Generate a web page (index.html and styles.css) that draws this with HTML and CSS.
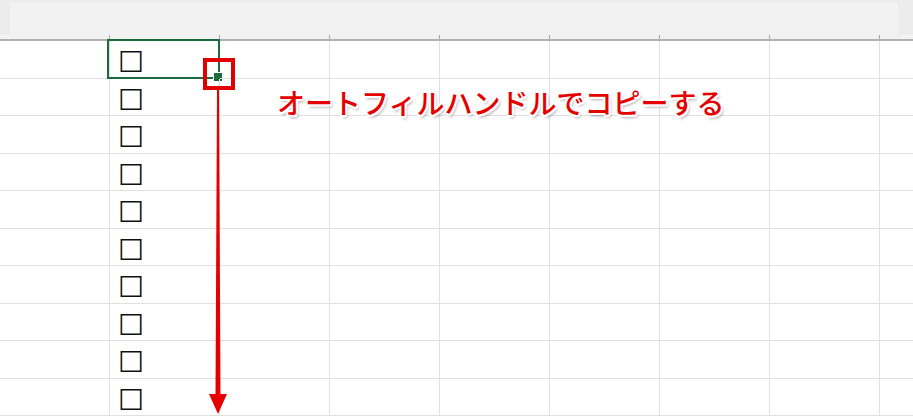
FILE: index.html
```html
<html>
	<head>
		<link rel="stylesheet" href="styles.css">
	</head>
	<body>
		<div class="page">
			<div class="header">
				<div class="header-panel"></div>
				<div class="ticks">
					<div></div><div class="sel"></div><div></div><div></div><div></div><div></div><div></div><div></div><div></div>
				</div>
			</div>
			<div class="sheet">
				<div class="cell"></div><div class="cell selected"><span class="box">☐</span></div><div class="cell"></div><div class="cell"></div><div class="cell"></div><div class="cell"></div><div class="cell"></div><div class="cell"></div><div class="cell"></div>
				<div class="cell"></div><div class="cell"><span class="box">☐</span></div><div class="cell"></div><div class="cell"></div><div class="cell"></div><div class="cell"></div><div class="cell"></div><div class="cell"></div><div class="cell"></div>
				<div class="cell"></div><div class="cell"><span class="box">☐</span></div><div class="cell"></div><div class="cell"></div><div class="cell"></div><div class="cell"></div><div class="cell"></div><div class="cell"></div><div class="cell"></div>
				<div class="cell"></div><div class="cell"><span class="box">☐</span></div><div class="cell"></div><div class="cell"></div><div class="cell"></div><div class="cell"></div><div class="cell"></div><div class="cell"></div><div class="cell"></div>
				<div class="cell"></div><div class="cell"><span class="box">☐</span></div><div class="cell"></div><div class="cell"></div><div class="cell"></div><div class="cell"></div><div class="cell"></div><div class="cell"></div><div class="cell"></div>
				<div class="cell"></div><div class="cell"><span class="box">☐</span></div><div class="cell"></div><div class="cell"></div><div class="cell"></div><div class="cell"></div><div class="cell"></div><div class="cell"></div><div class="cell"></div>
				<div class="cell"></div><div class="cell"><span class="box">☐</span></div><div class="cell"></div><div class="cell"></div><div class="cell"></div><div class="cell"></div><div class="cell"></div><div class="cell"></div><div class="cell"></div>
				<div class="cell"></div><div class="cell"><span class="box">☐</span></div><div class="cell"></div><div class="cell"></div><div class="cell"></div><div class="cell"></div><div class="cell"></div><div class="cell"></div><div class="cell"></div>
				<div class="cell"></div><div class="cell"><span class="box">☐</span></div><div class="cell"></div><div class="cell"></div><div class="cell"></div><div class="cell"></div><div class="cell"></div><div class="cell"></div><div class="cell"></div>
				<div class="cell"></div><div class="cell"><span class="box">☐</span></div><div class="cell"></div><div class="cell"></div><div class="cell"></div><div class="cell"></div><div class="cell"></div><div class="cell"></div><div class="cell"></div>
			</div>

			<!-- annotations -->
			<div class="handle-mark"></div>
			<svg class="arrow" width="24" height="330" viewBox="0 0 24 330">
				<polygon points="9,0 11,0 12.5,306 7.5,306" fill="#e60000"/>
				<polygon points="1,304 19,304 10,324" fill="#e60000"/>
			</svg>
			<p class="note">オートフィルハンドルでコピーする</p>
		</div>
	</body>
</html>
```

FILE: styles.css
```css
* {
	box-sizing: border-box;
	padding: 0;
	margin: 0;
}
html {
	background-color: white;
	font-family: "Liberation Sans", sans-serif;
}
.page {
	position: relative;
	width: 913px;
	height: 417px;
	overflow: hidden;
}
.header {
	height: 41px;
	background-color: #ececec;
	border-bottom: 2px solid #b1b1b1;
	display: flex;
	flex-direction: column;
}
.header-panel {
	flex: 1;
	margin: 2px 15px 0 10px;
	background-color: #f2f2f2;
}
.ticks {
	height: 4px;
	display: grid;
	grid-template-columns: 110px repeat(8, 110px);
	background-color: #f2f2f2;
}
.ticks div {
	border-right: 1px solid #a8a8a8;
}
.sheet {
	display: grid;
	grid-template-columns: 110px repeat(8, 110px);
	grid-auto-rows: 37.5px;
}
.cell {
	position: relative;
	border-right: 1px solid #e0e0e0;
	border-bottom: 1px solid #e0e0e0;
	padding: 7px 0 0 8px;
}
.box {
	font-family: "DejaVu Sans", sans-serif;
	font-weight: bold;
	font-size: 29px;
	line-height: 29px;
	color: #111;
}
.selected::before {
	content: "";
	position: absolute;
	top: -2px;
	left: -3px;
	right: -1px;
	bottom: -1px;
	border: 2px solid #1b6b3e;
}
.selected::after {
	content: "";
	position: absolute;
	right: -4px;
	bottom: -4px;
	width: 8px;
	height: 8px;
	background-color: #1b6b3e;
	border: 1px solid white;
}
.handle-mark {
	position: absolute;
	left: 203px;
	top: 58px;
	width: 32px;
	height: 32px;
	border: 4px solid #e00000;
}
.arrow {
	position: absolute;
	left: 208px;
	top: 90px;
}
.note {
	position: absolute;
	left: 277px;
	top: 84px;
	font-family: "Noto Sans CJK JP", sans-serif;
	font-weight: 500;
	font-size: 28px;
	line-height: 36px;
	color: #e60000;
	white-space: nowrap;
	text-shadow:
		-2px 0 0 white, 2px 0 0 white, 0 -2px 0 white, 0 2px 0 white,
		-1.5px -1.5px 0 white, 1.5px -1.5px 0 white, -1.5px 1.5px 0 white, 1.5px 1.5px 0 white,
		2px 3px 3px rgba(0, 0, 0, 0.35);
}
```
